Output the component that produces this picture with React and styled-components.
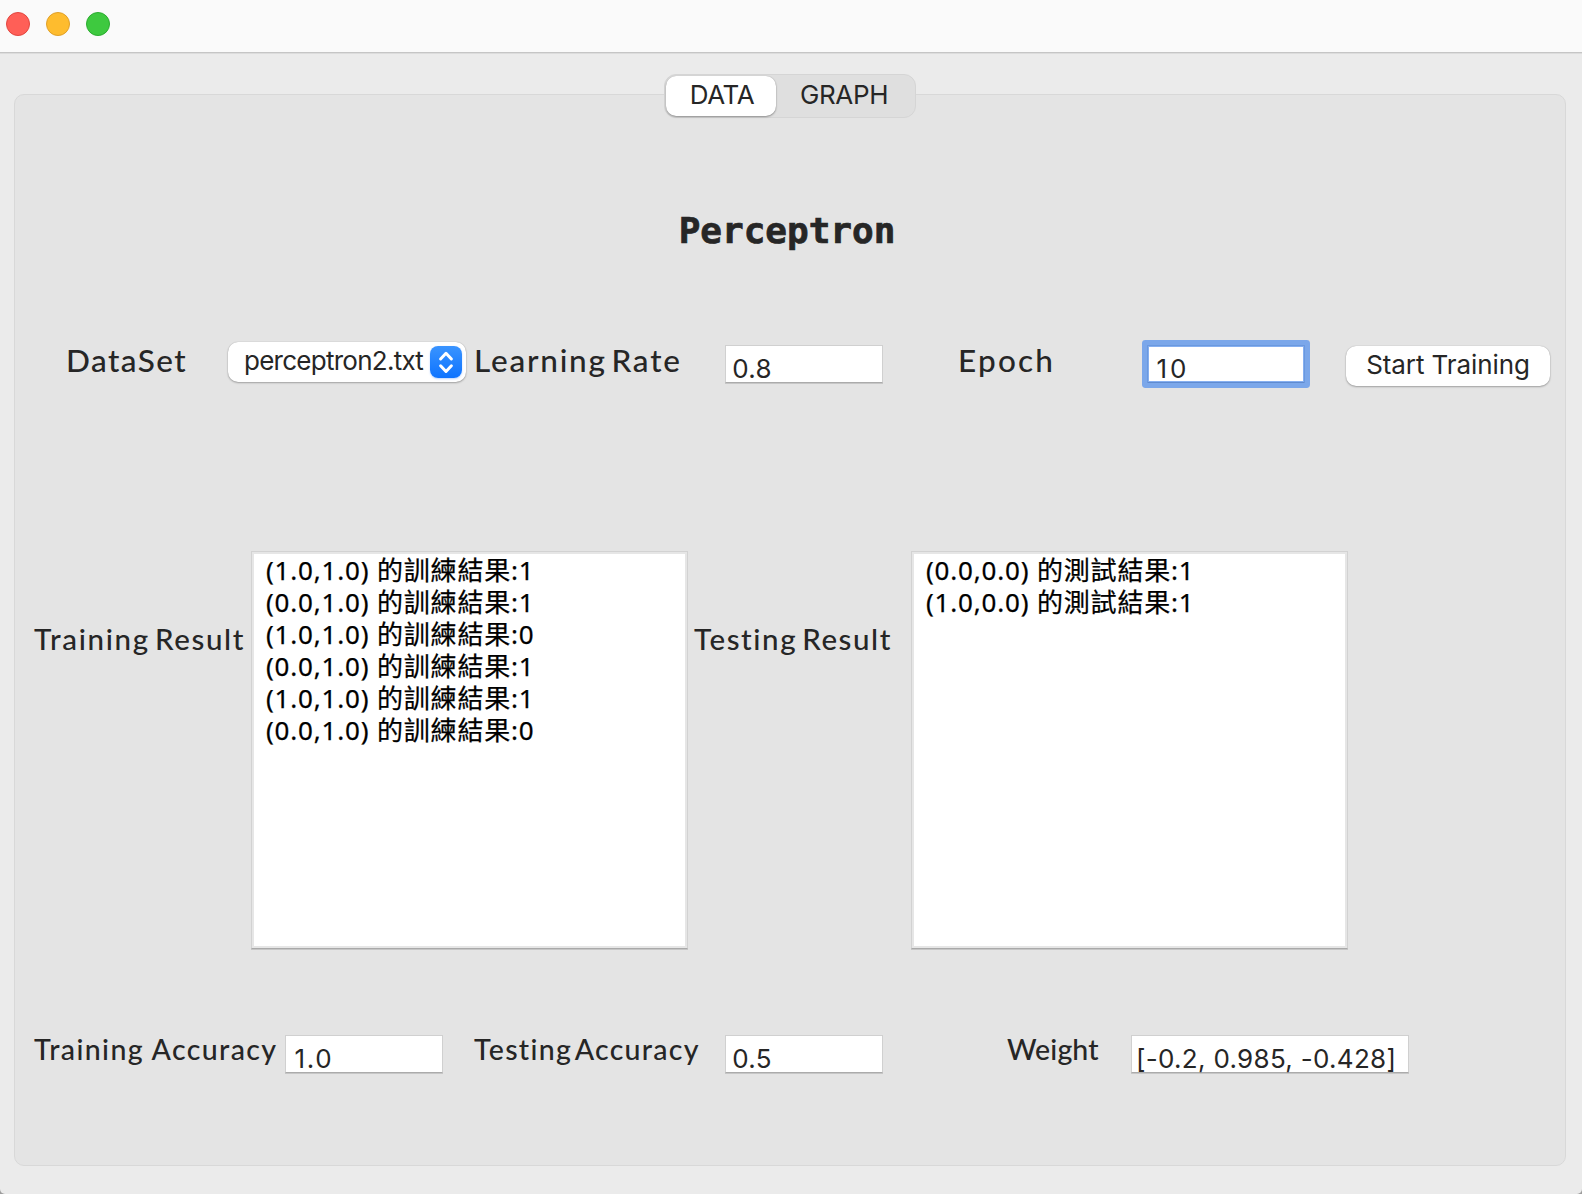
import React, { useState } from "react";
import styled, { createGlobalStyle } from "styled-components";

const UI_FONT = 'Inter, "Noto Sans CJK TC", sans-serif';
const LABEL_FONT = 'Lato, "Noto Sans CJK TC", sans-serif';
const LIST_FONT = '"Noto Sans", "Noto Sans CJK TC", sans-serif';

const GlobalStyle = createGlobalStyle`
  * { box-sizing: border-box; }
  html, body { margin: 0; padding: 0; background: #9c9c9c; }
  button { appearance: none; border: 0; margin: 0; padding: 0; font: inherit; color: inherit; text-align: left; }
`;

const Window = styled.div`
  display: flex;
  flex-direction: column;
  width: 1582px;
  height: 1194px;
  overflow: hidden;
  background: #ebebeb;
  border-radius: 0 0 5px 5px;
  color: #262626;
  font: 26px ${UI_FONT};
`;

const TitleBar = styled.header`
  display: flex;
  gap: 16px;
  height: 53px;
  padding: 12px 6px 0;
  background: #fafafa;
  border-bottom: 1px solid #c5c5c5;
  box-shadow: 0 1px 0 #dcdcdc;
`;

const Light = styled.span`
  width: 24px;
  height: 24px;
  border-radius: 50%;
  background: ${(p) => p.$fill};
  border: 1px solid ${(p) => p.$edge};
`;

const Content = styled.main`
  display: flex;
  flex-direction: column;
  padding: 21px 16px 0 14px;
`;

const Tabs = styled.nav`
  z-index: 1;
  display: flex;
  align-self: center;
  height: 44px;
  margin-bottom: -24px;
  padding: 1px;
  background: #dfdfdf;
  border: 1px solid #d5d5d5;
  border-radius: 12px;
`;

const Tab = styled.button`
  width: ${(p) => p.$width}px;
  height: 40px;
  padding: 0 ${(p) => p.$right || 0}px 3px ${(p) => p.$left || 0}px;
  line-height: 37px;
  text-align: center;
  letter-spacing: -0.35px;
  border-radius: 10px;
  background: ${(p) => (p.$active ? "#fff" : "transparent")};
  box-shadow: ${(p) => (p.$active ? "0 1px 2px rgba(0,0,0,.34), 0 0 1px rgba(0,0,0,.25)" : "none")};
`;

const Panel = styled.section`
  height: 1072px;
  padding-top: 116px;
  background: #e4e4e4;
  border: 1px solid #d8d8d8;
  border-radius: 10px;
`;

const Title = styled.h1`
  margin: 0 6px 0 0;
  text-align: center;
  font: bold 36px/40px "DejaVu Sans Mono", monospace;
  -webkit-text-stroke: 0.7px currentColor;
`;

const Row = styled.div`
  display: grid;
  grid-template-columns: ${(p) => p.$columns};
  align-items: start;
  white-space: nowrap;
`;

const ParameterRow = styled(Row)`
  height: 48px;
  margin-top: 89px;
  padding-left: 51px;
`;

const ResultRow = styled(Row)`
  height: 399px;
  margin-top: 163px;
  padding-left: 19px;
`;

const AccuracyRow = styled(Row)`
  height: 48px;
  margin-top: 80px;
  padding-left: 19px;
`;

const Label = styled.label`
  font: 500 ${(p) => p.$size}px/40px ${LABEL_FONT};
  letter-spacing: ${(p) => p.$tracking}px;
  word-spacing: ${(p) => p.$word || 0}px;
`;

const ResultLabel = styled(Label)`
  margin-top: 68px;
`;

const AccuracyLabel = styled(Label)`
  line-height: 39px;
`;

const Select = styled.button`
  display: flex;
  justify-content: space-between;
  width: 238px;
  height: 40px;
  margin-top: 2px;
  padding: 0 4px 0 16px;
  line-height: 37px;
  letter-spacing: -0.74px;
  background: #fff;
  border-radius: 10px;
  box-shadow: 0 1px 2px rgba(0, 0, 0, 0.28), 0 0 1px rgba(0, 0, 0, 0.28);
`;

const Stepper = styled.span`
  width: 32px;
  height: 32px;
  margin-top: 4px;
  border-radius: 8px;
  background: linear-gradient(#3a94ff, #0d73ff);
  box-shadow: 0 1px 2px rgba(20, 110, 255, 0.3);
  svg { display: block; }
`;

const PushButton = styled.button`
  width: 204px;
  height: 40px;
  margin-top: 6px;
  padding-bottom: 3px;
  line-height: 37px;
  letter-spacing: -0.1px;
  text-align: center;
  background: #fff;
  border-radius: 10px;
  box-shadow: 0 1px 2px rgba(0, 0, 0, 0.28), 0 0 1px rgba(0, 0, 0, 0.28);
`;

const Field = styled.div`
  width: ${(p) => p.$width || 158}px;
  height: 38px;
  margin-top: 5px;
  background: #fff;
  border: 1px solid ${(p) => (p.$focused ? "#6a99df" : "#d0d0d0")};
  border-bottom-color: ${(p) => (p.$focused ? "#5f8bd0" : "#ababab")};
  border-radius: ${(p) => (p.$focused ? 1 : 0)}px;
  box-shadow: ${(p) =>
    p.$focused ? "inset 0 0 0 1px #86aff0, 0 0 0 5px #7ba7ea" : "0 1px 0 #c6c6c6"};
`;

const Value = styled.div`
  padding: 8.5px 0 0 ${(p) => p.$inset}px;
  line-height: 28px;
  letter-spacing: ${(p) => p.$tracking}px;
`;

const ListBox = styled.ul`
  list-style: none;
  width: 437px;
  height: 398px;
  margin: 0;
  padding: 2px 14px;
  background: #fff;
  border: 1px solid #d2d2d2;
  border-bottom-color: #a9a9a9;
  box-shadow: inset 0 0 0 2px #e6e6e6, 0 1px 0 #c6c6c6;
  color: #000;
`;

const ListItem = styled.li`
  height: 32px;
  font: 26px/32px ${LIST_FONT};
  letter-spacing: 0.82px;
  -webkit-text-stroke: 0.25px currentColor;
`;

const TRAINING = [
  "(1.0,1.0) 的訓練結果:1",
  "(0.0,1.0) 的訓練結果:1",
  "(1.0,1.0) 的訓練結果:0",
  "(0.0,1.0) 的訓練結果:1",
  "(1.0,1.0) 的訓練結果:1",
  "(0.0,1.0) 的訓練結果:0",
];
const TESTING = ["(0.0,0.0) 的測試結果:1", "(1.0,0.0) 的測試結果:1"];

function TextField({ value, width, focused, inset = 6.3, tracking = 0.3 }) {
  return (
    <Field $width={width} $focused={focused}>
      <Value $inset={inset} $tracking={tracking}>{value}</Value>
    </Field>
  );
}

function ResultList({ items }) {
  return (
    <ListBox>
      {items.map((text, i) => (
        <ListItem key={i}>{text}</ListItem>
      ))}
    </ListBox>
  );
}

export default function App() {
  const [tab, setTab] = useState("DATA");
  return (
    <>
      <GlobalStyle />
      <Window>
        <TitleBar>
          <Light $fill="#ff5f57" $edge="#e2463f" />
          <Light $fill="#febc2e" $edge="#e0a028" />
          <Light $fill="#3ec93f" $edge="#2bac2f" />
        </TitleBar>
        <Content>
          <Tabs>
            <Tab $width={110} $left={2} $active={tab === "DATA"} onClick={() => setTab("DATA")}>DATA</Tab>
            <Tab $width={138} $right={2} $active={tab === "GRAPH"} onClick={() => setTab("GRAPH")}>GRAPH</Tab>
          </Tabs>
          <Panel>
            <Title>Perceptron</Title>
            <ParameterRow $columns="162px 246px 251px 233px 189px 199px 204px">
              <Label $size={31.5} $tracking={1.45}>DataSet</Label>
              <Select>
                perceptron2.txt
                <Stepper>
                  <svg width="32" height="32" viewBox="0 0 32 32" fill="none" stroke="#fff" strokeWidth="3" strokeLinecap="round" strokeLinejoin="round">
                    <path d="M10.6 13 16 7.3 21.4 13M10.6 19.8 16 25.5 21.4 19.8" />
                  </svg>
                </Stepper>
              </Select>
              <Label $size={31.5} $tracking={1.78} $word={-5}>Learning Rate</Label>
              <TextField value="0.8" />
              <Label $size={31.5} $tracking={2.2}>Epoch</Label>
              <TextField value="10" focused inset={8.5} tracking={3} />
              <PushButton>Start Training</PushButton>
            </ParameterRow>
            <ResultRow $columns="217px 443px 217px 437px">
              <ResultLabel $size={29.5} $tracking={1.67} $word={-4}>Training Result</ResultLabel>
              <ResultList items={TRAINING} />
              <ResultLabel $size={29.5} $tracking={1.58} $word={-4}>Testing Result</ResultLabel>
              <ResultList items={TESTING} />
            </ResultRow>
            <AccuracyRow $columns="251px 189px 251px 282px 124px 278px">
              <AccuracyLabel $size={28.5} $tracking={1.38}>Training Accuracy</AccuracyLabel>
              <TextField value="1.0" inset={8.5} tracking={1.7} />
              <AccuracyLabel $size={28.5} $tracking={1.3} $word={-5}>Testing Accuracy</AccuracyLabel>
              <TextField value="0.5" />
              <AccuracyLabel $size={28.5} $tracking={0.12}>Weight</AccuracyLabel>
              <TextField value="[-0.2, 0.985, -0.428]" width={278} inset={4} tracking={0.3} />
            </AccuracyRow>
          </Panel>
        </Content>
      </Window>
    </>
  );
}
